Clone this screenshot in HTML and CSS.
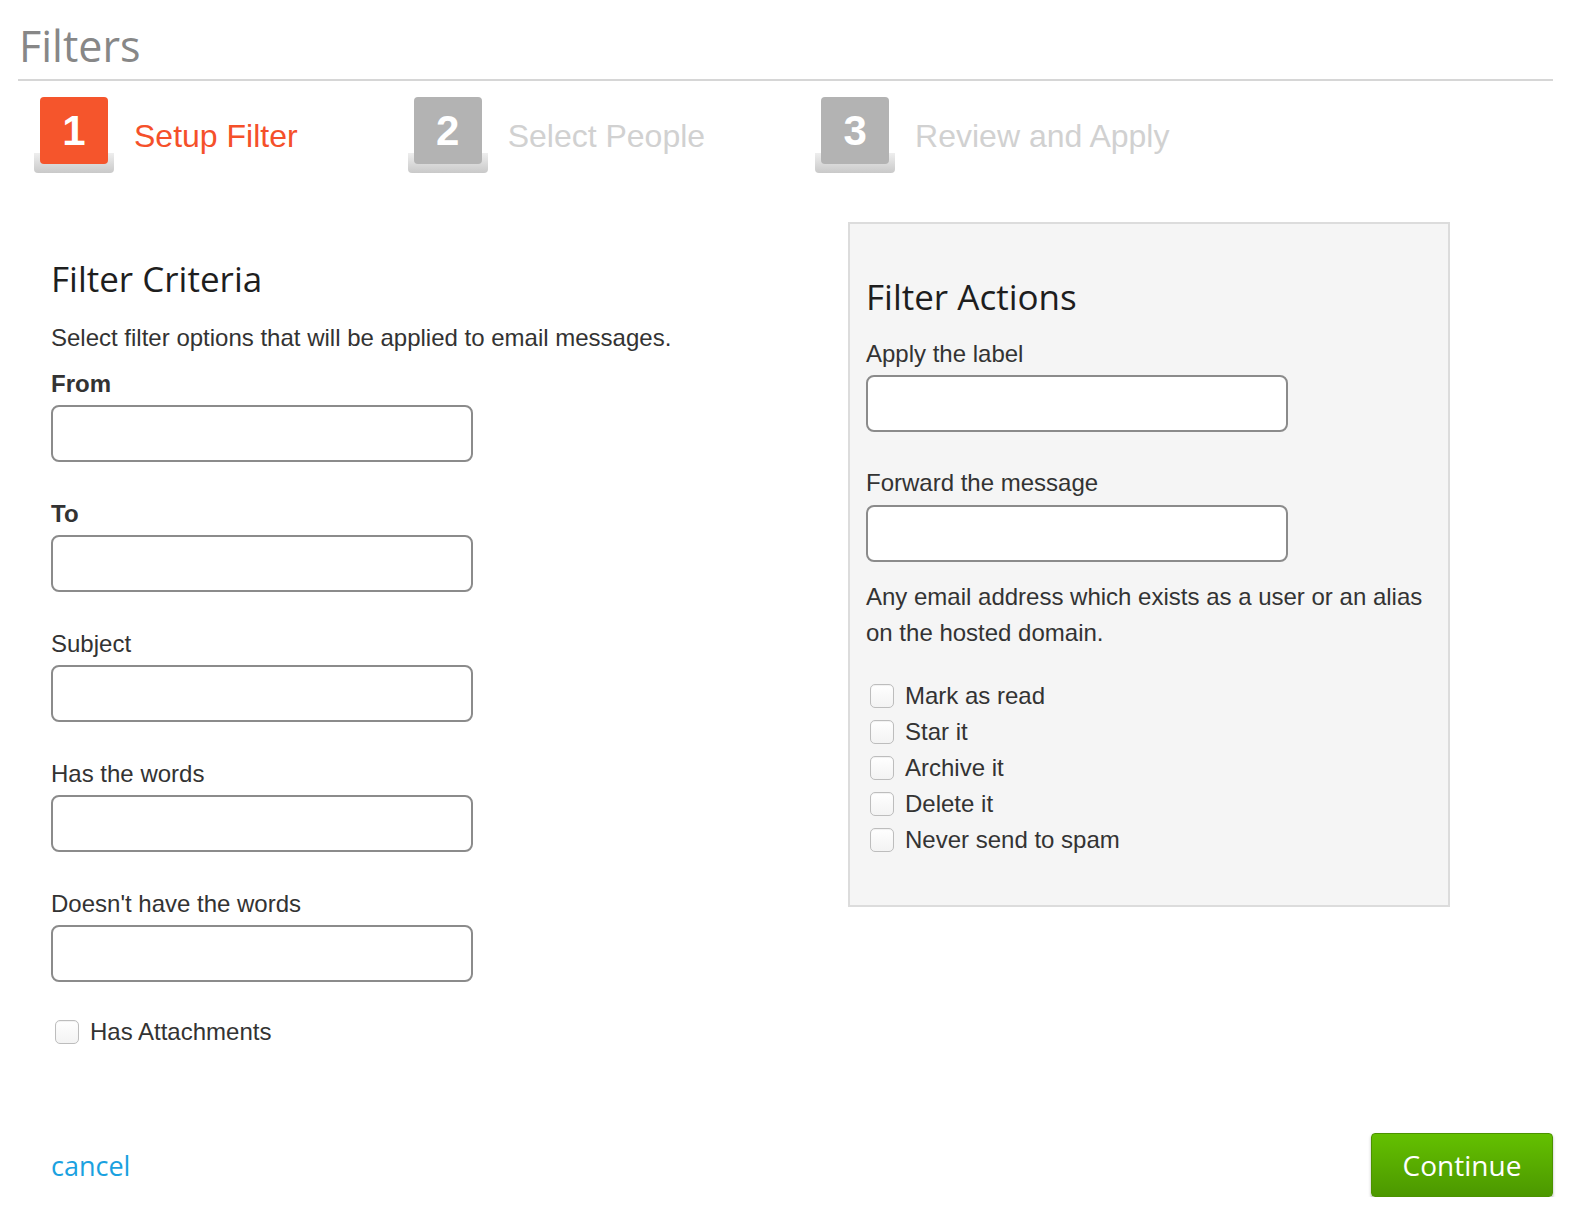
FILE: index.html
```html
<!DOCTYPE html>
<html lang="en">
<head>
<meta charset="utf-8">
<title>Filters</title>
<link rel="stylesheet" href="styles.css">
</head>
<body>
<div class="page">
  <header class="page-header">
    <h1 class="page-title">Filters</h1>
  </header>

  <ol class="steps">
    <li class="step step-active">
      <span class="step-icon"><span class="step-num">1</span></span>
      <span class="step-label">Setup Filter</span>
    </li>
    <li class="step">
      <span class="step-icon"><span class="step-num">2</span></span>
      <span class="step-label">Select People</span>
    </li>
    <li class="step">
      <span class="step-icon"><span class="step-num">3</span></span>
      <span class="step-label">Review and Apply</span>
    </li>
  </ol>

  <div class="main">
    <section class="criteria">
      <h2 class="section-title">Filter Criteria</h2>
      <p class="intro">Select filter options that will be applied to email messages.</p>

      <div class="field">
        <label class="field-label bold">From</label>
        <input class="text-input" type="text">
      </div>
      <div class="field">
        <label class="field-label bold">To</label>
        <input class="text-input" type="text">
      </div>
      <div class="field">
        <label class="field-label">Subject</label>
        <input class="text-input" type="text">
      </div>
      <div class="field">
        <label class="field-label">Has the words</label>
        <input class="text-input" type="text">
      </div>
      <div class="field">
        <label class="field-label">Doesn't have the words</label>
        <input class="text-input" type="text">
      </div>

      <label class="check-row check-attach">
        <input class="check" type="checkbox">
        <span>Has Attachments</span>
      </label>
    </section>

    <aside class="actions">
      <h2 class="section-title">Filter Actions</h2>
      <div class="field first">
        <label class="field-label">Apply the label</label>
        <input class="text-input" type="text">
      </div>
      <div class="field">
        <label class="field-label">Forward the message</label>
        <input class="text-input" type="text">
      </div>
      <p class="help">Any email address which exists as a user or an alias<br>on the hosted domain.</p>

      <div class="check-list">
        <label class="check-row"><input class="check" type="checkbox"><span>Mark as read</span></label>
        <label class="check-row"><input class="check" type="checkbox"><span>Star it</span></label>
        <label class="check-row"><input class="check" type="checkbox"><span>Archive it</span></label>
        <label class="check-row"><input class="check" type="checkbox"><span>Delete it</span></label>
        <label class="check-row"><input class="check" type="checkbox"><span>Never send to spam</span></label>
      </div>
    </aside>
  </div>

  <footer class="footer">
    <a class="cancel" href="#">cancel</a>
    <button class="continue" type="button">Continue</button>
  </footer>
</div>
</body>
</html>
```

FILE: styles.css
```css
* {
  box-sizing: border-box;
}

html, body {
  margin: 0;
  padding: 0;
  background: #ffffff;
}

body {
  font-family: "Liberation Sans", Arial, sans-serif;
  color: #333333;
}

.page {
  padding: 0 19px 0 18px;
}

/* Header */
.page-header {
  padding-top: 20px;
  padding-bottom: 7px;
  border-bottom: 2px solid #d6d6d6;
}

.page-title {
  margin: 0;
  padding-left: 1px;
  font-family: "Open Sans", sans-serif;
  font-weight: 400;
  font-size: 43px;
  line-height: 52px;
  color: #878787;
}

/* Steps */
.steps {
  list-style: none;
  margin: 16px 0 0 16px;
  padding: 0;
  display: flex;
  gap: 110px;
}

.step {
  display: flex;
  align-items: center;
  gap: 20px;
}

.step-icon {
  display: block;
  width: 80px;
  height: 76px;
  border-radius: 4px;
  background: linear-gradient(#eeeeee, #c9c9c9) no-repeat left bottom / 100% 20px;
}

.step-num {
  display: flex;
  align-items: center;
  justify-content: center;
  width: 68px;
  height: 67px;
  margin-left: 6px;
  border-radius: 4px;
  background: #b3b3b3;
  color: #ffffff;
  font-family: "Liberation Sans", Arial, sans-serif;
  font-weight: 700;
  font-size: 42px;
  line-height: 1;
}

.step-label {
  padding-top: 2px;
  font-size: 32px;
  color: #d1d1d1;
}

.step-active .step-num {
  background: #f5552c;
}

.step-active .step-label {
  color: #f5502a;
}

/* Main */
.main {
  display: flex;
  align-items: flex-start;
  margin-top: 49px;
  padding-left: 33px;
}

.criteria {
  width: 797px;
  padding-top: 35px;
}

.section-title {
  margin: 0;
  font-family: "Open Sans", sans-serif;
  font-weight: 400;
  font-size: 35px;
  line-height: 44px;
  color: #1e1e1e;
}

.intro {
  margin: 23px 0 0;
  font-size: 24px;
  line-height: 28px;
}

.field {
  margin-top: 18px;
}

.field + .field {
  margin-top: 38px;
}

.actions .field.first {
  margin-top: 21px;
}

.actions .field + .field {
  margin-top: 37px;
}

.field-label {
  display: block;
  font-size: 24px;
  line-height: 28px;
  color: #333333;
}

.field-label.bold {
  font-weight: 700;
}

.text-input {
  display: block;
  width: 422px;
  height: 57px;
  margin-top: 7px;
  border: 2px solid #8b8b8b;
  border-radius: 8px;
  background: #ffffff;
  padding: 0 12px;
  font-family: "Liberation Sans", Arial, sans-serif;
  font-size: 22px;
  outline: none;
}

.actions .field + .field .text-input {
  margin-top: 8px;
}

/* Checkboxes */
.check-row {
  display: flex;
  align-items: center;
  font-size: 24px;
  line-height: 36px;
  color: #333333;
}

.check {
  appearance: none;
  -webkit-appearance: none;
  width: 24px;
  height: 24px;
  margin: 0 11px 0 4px;
  border: 1px solid #bdbdbd;
  border-radius: 5px;
  background: linear-gradient(#ffffff, #f3f3f3);
  box-shadow: inset 0 1px 1px rgba(0, 0, 0, 0.06);
  flex: none;
}

.check-attach {
  margin-top: 36px;
  line-height: 28px;
}

/* Actions panel */
.actions {
  width: 602px;
  padding: 51px 16px 47px 16px;
  background: #f5f5f5;
  border: 2px solid #dcdcdc;
}

.help {
  margin: 17px 0 0;
  font-size: 24px;
  line-height: 36px;
  color: #333333;
}

.check-list {
  margin-top: 27px;
}

/* Footer */
.footer {
  display: flex;
  align-items: center;
  justify-content: space-between;
  margin-top: 87px;
  padding-left: 33px;
}

.cancel {
  font-family: "Open Sans", sans-serif;
  font-size: 27px;
  color: #1aa1e0;
  text-decoration: none;
}

.continue {
  width: 182px;
  height: 64px;
  padding: 0;
  border: 1px solid #4c9300;
  border-radius: 4px;
  background: linear-gradient(#64c000, #4c9800);
  box-shadow: 0 2px 3px rgba(0, 0, 0, 0.3);
  color: #ffffff;
  font-family: "Open Sans", sans-serif;
  font-size: 28px;
  cursor: pointer;
}
```
